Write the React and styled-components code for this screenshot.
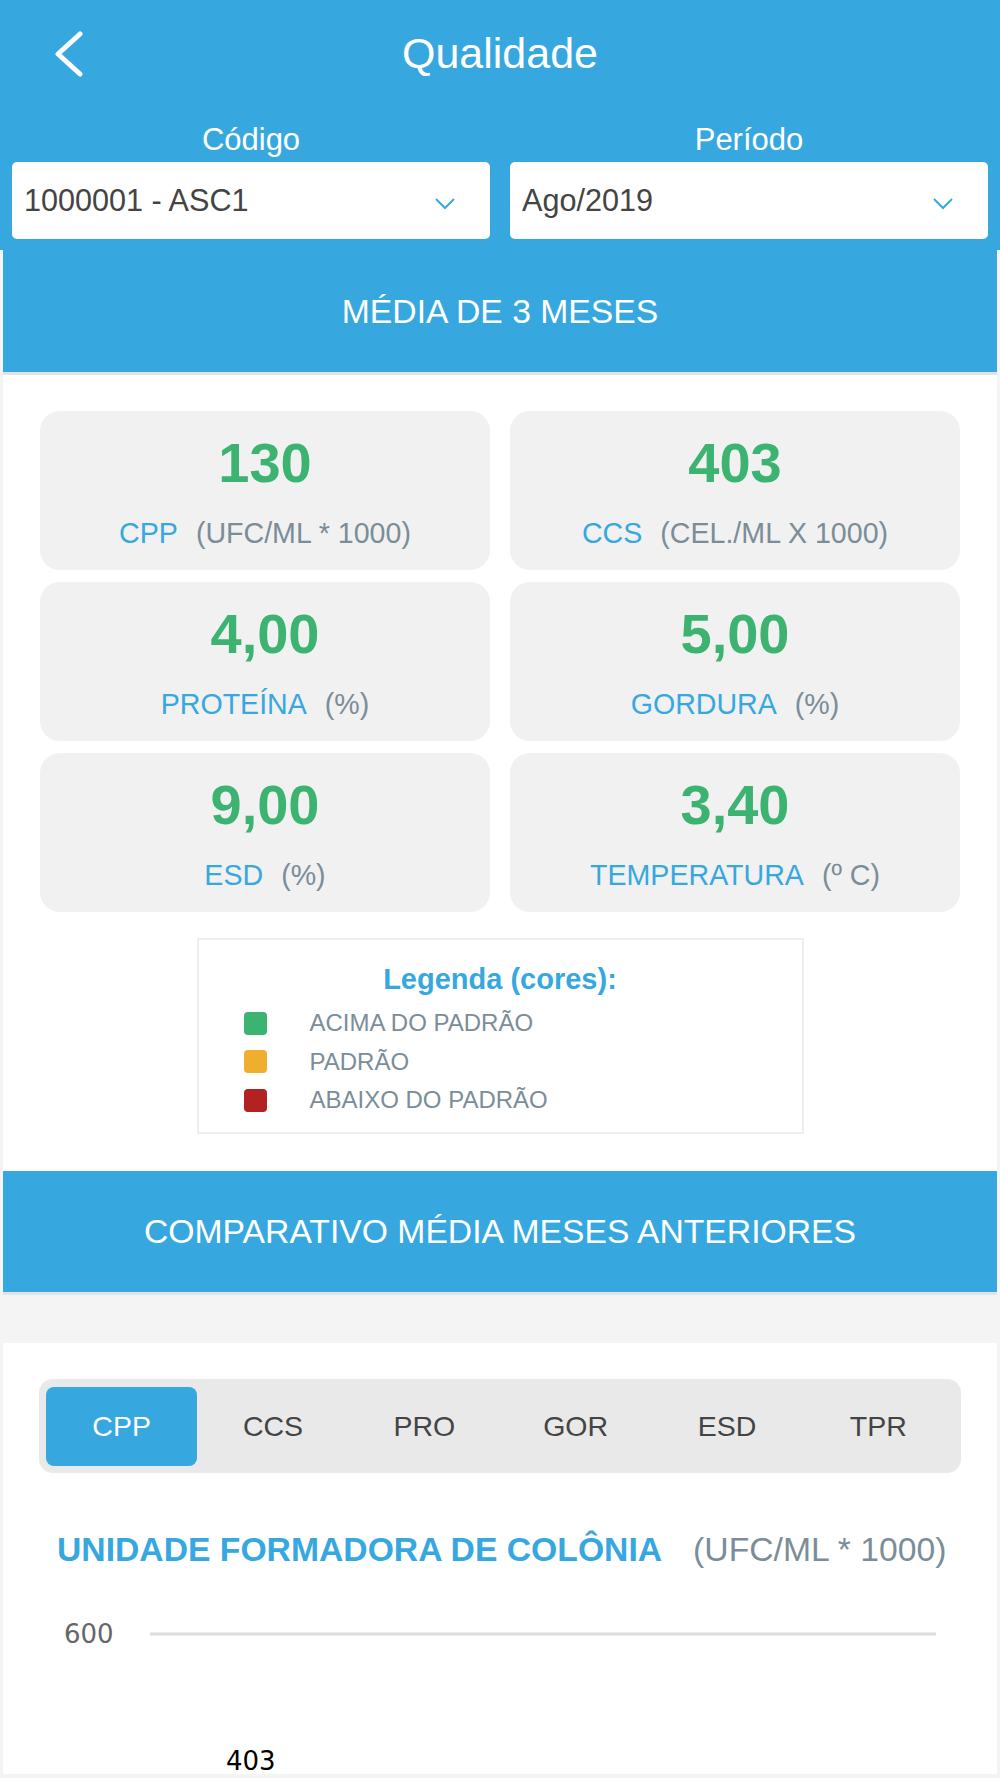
import React from 'react';
import styled, { createGlobalStyle } from 'styled-components';

const BLUE = '#37a8df';
const GREEN = '#3cb371';
const SLATE = '#7b8d99';

const GlobalStyle = createGlobalStyle`
  html, body {
    margin: 0;
    padding: 0;
    background: #f4f4f4;
  }
  body {
    font-family: "Liberation Sans", Arial, sans-serif;
  }
  * { box-sizing: border-box; }
`;

const Page = styled.div`
  width: 1000px;
  min-height: 1778px;
  background: #f4f4f4;
`;

const Header = styled.header`
  background: ${BLUE};
  padding: 28px 12px 11px;
`;

const TopBar = styled.div`
  position: relative;
  height: 50px;
  display: flex;
  align-items: center;
  justify-content: center;
`;

const BackButton = styled.button`
  position: absolute;
  left: 36px;
  top: 2px;
  width: 44px;
  height: 48px;
  border: 0;
  background: transparent;
  padding: 0;
  display: flex;
  align-items: center;
  justify-content: center;
`;

const Title = styled.h1`
  margin: 0;
  font-size: 43px;
  line-height: 50px;
  font-weight: 400;
  color: #fff;
`;

const Filters = styled.div`
  margin-top: 44px;
  display: grid;
  grid-template-columns: 1fr 1fr;
  gap: 20px;
`;

const Field = styled.div`
  display: flex;
  flex-direction: column;
`;

const FieldLabel = styled.label`
  font-size: 31px;
  line-height: 36px;
  color: #fff;
  text-align: center;
  margin-bottom: 4px;
`;

const Select = styled.div`
  height: 77px;
  background: #fff;
  border-radius: 5px;
  display: flex;
  align-items: center;
  justify-content: space-between;
  padding: 0 35px 0 12px;
  font-size: 30.6px;
  color: #444;
`;

const Caret = styled.svg`
  margin-top: 6px;
`;

const Section = styled.section`
  margin: 0 3px;
  background: ${(p) => (p.$plain ? 'transparent' : '#fff')};
`;

const SectionBar = styled.div`
  height: ${(p) => p.$h}px;
  background: ${BLUE};
  border-bottom: 3px solid #e3e3e3;
  display: flex;
  align-items: center;
  justify-content: center;
  color: #fff;
  font-size: 33.7px;
`;

const Body = styled.div`
  padding: 36px 37px 37px;
`;

const Grid = styled.div`
  display: grid;
  grid-template-columns: 1fr 1fr;
  column-gap: 20px;
  row-gap: 12px;
`;

const Metric = styled.div`
  background: #f1f1f1;
  border-radius: 20px;
  padding: 20px 0 21px;
  display: flex;
  flex-direction: column;
  align-items: center;
`;

const Value = styled.div`
  font-size: 56px;
  line-height: 64px;
  font-weight: 700;
  color: ${GREEN};
`;

const MetricLabel = styled.div`
  margin-top: 22px;
  font-size: 28.6px;
  line-height: 32px;
  color: ${BLUE};
  white-space: nowrap;
`;

const Unit = styled.span`
  margin-left: ${(p) => p.$gap || 18}px;
  color: ${SLATE};
`;

const Legend = styled.div`
  width: 607px;
  margin: 26px auto 0;
  border: 2px solid #eeeeee;
  padding: 22px 0 12px 45px;
`;

const LegendTitle = styled.div`
  font-size: 29px;
  line-height: 34px;
  font-weight: 700;
  color: ${BLUE};
  text-align: center;
  margin: 0 0 8px -45px;
`;

const LegendRow = styled.div`
  height: 38.5px;
  display: flex;
  align-items: center;
  gap: 43px;
  font-size: 24px;
  color: ${SLATE};
`;

const Swatch = styled.span`
  width: 23px;
  height: 23px;
  border-radius: 4px;
  background: ${(p) => p.$color};
`;

const Gap = styled.div`
  height: 48px;
`;

const ChartCard = styled.div`
  background: #fff;
  padding-top: 36px;
  height: 431px;
`;

const Tabs = styled.div`
  margin: 0 36px;
  height: 94px;
  background: #e9e9e9;
  border-radius: 14px;
  padding: 8px 7px 7px;
  display: grid;
  grid-template-columns: repeat(6, 1fr);
`;

const Tab = styled.button`
  border: 0;
  border-radius: 8px;
  background: ${(p) => (p.$active ? BLUE : 'transparent')};
  color: ${(p) => (p.$active ? '#fff' : '#444')};
  font-family: "Liberation Sans", Arial, sans-serif;
  font-size: 28.5px;
  padding: 0;
`;

const ChartTitle = styled.div`
  margin: 56px 0 0 54px;
  font-size: 33.7px;
  line-height: 40px;
  white-space: nowrap;
`;

const ChartName = styled.span`
  font-weight: 700;
  color: ${BLUE};
`;

const Chart = styled.svg`
  display: block;
  margin-top: 21px;
`;

const metrics = [
  { value: '130', label: 'CPP', unit: '(UFC/ML * 1000)' },
  { value: '403', label: 'CCS', unit: '(CEL./ML X 1000)' },
  { value: '4,00', label: 'PROTEÍNA', unit: '(%)' },
  { value: '5,00', label: 'GORDURA', unit: '(%)' },
  { value: '9,00', label: 'ESD', unit: '(%)' },
  { value: '3,40', label: 'TEMPERATURA', unit: '(º C)' },
];

const legend = [
  { color: '#3cb371', text: 'ACIMA DO PADRÃO' },
  { color: '#f0ae2e', text: 'PADRÃO' },
  { color: '#b22222', text: 'ABAIXO DO PADRÃO' },
];

const tabs = ['CPP', 'CCS', 'PRO', 'GOR', 'ESD', 'TPR'];

const App = () => {
  return (
    <Page>
      <GlobalStyle />
      <Header>
        <TopBar>
          <BackButton aria-label="Voltar">
            <svg width="30" height="46" viewBox="0 0 30 46">
              <polyline
                points="25,3 3,23 25,43"
                fill="none"
                stroke="#fff"
                strokeWidth="5"
                strokeLinecap="round"
                strokeLinejoin="round"
              />
            </svg>
          </BackButton>
          <Title>Qualidade</Title>
        </TopBar>
        <Filters>
          <Field>
            <FieldLabel>Código</FieldLabel>
            <Select>
              1000001 - ASC1
              <Caret width="20" height="12" viewBox="0 0 20 12">
                <polyline points="1,1 10,10 19,1" fill="none" stroke={BLUE} strokeWidth="2" />
              </Caret>
            </Select>
          </Field>
          <Field>
            <FieldLabel>Período</FieldLabel>
            <Select>
              Ago/2019
              <Caret width="20" height="12" viewBox="0 0 20 12">
                <polyline points="1,1 10,10 19,1" fill="none" stroke={BLUE} strokeWidth="2" />
              </Caret>
            </Select>
          </Field>
        </Filters>
      </Header>

      <Section>
        <SectionBar $h={125}>MÉDIA DE 3 MESES</SectionBar>
        <Body>
          <Grid>
            {metrics.map((m) => (
              <Metric key={m.label}>
                <Value>{m.value}</Value>
                <MetricLabel>
                  {m.label}
                  <Unit>{m.unit}</Unit>
                </MetricLabel>
              </Metric>
            ))}
          </Grid>
          <Legend>
            <LegendTitle>Legenda (cores):</LegendTitle>
            {legend.map((l) => (
              <LegendRow key={l.text}>
                <Swatch $color={l.color} />
                {l.text}
              </LegendRow>
            ))}
          </Legend>
        </Body>
      </Section>

      <Section $plain>
        <SectionBar $h={124}>COMPARATIVO MÉDIA MESES ANTERIORES</SectionBar>
        <Gap />
        <ChartCard>
          <Tabs>
            {tabs.map((t, i) => (
              <Tab key={t} $active={i === 0}>{t}</Tab>
            ))}
          </Tabs>
          <ChartTitle>
            <ChartName>UNIDADE FORMADORA DE COLÔNIA</ChartName>
            <Unit $gap={31}>(UFC/ML * 1000)</Unit>
          </ChartTitle>
          <Chart width="994" height="186" viewBox="0 0 994 186">
            <text x="61" y="53" fontFamily="DejaVu Sans, sans-serif" fontSize="26" fill="#666">600</text>
            <line x1="147" y1="44" x2="933" y2="44" stroke="#dcdcdc" strokeWidth="3" />
            <text x="223" y="180" fontFamily="DejaVu Sans, sans-serif" fontSize="26" fill="#000">403</text>
          </Chart>
        </ChartCard>
      </Section>
    </Page>
  );
};

export default App;
